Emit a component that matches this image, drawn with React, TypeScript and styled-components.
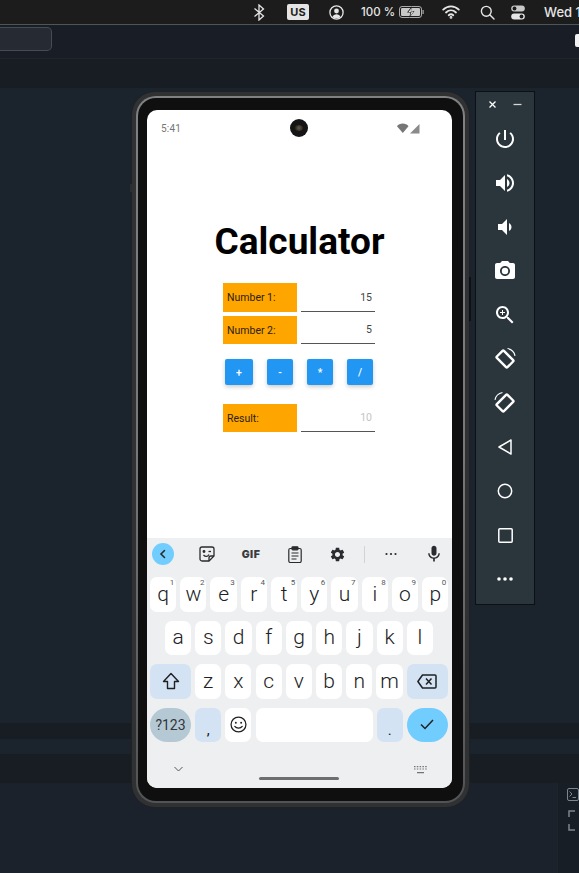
import React from 'react';
import styled, { createGlobalStyle } from 'styled-components';

const GlobalStyle = createGlobalStyle`
  html, body {
    margin: 0;
    padding: 0;
    height: 100%;
    overflow: hidden;
    background: #1b232d;
    font-family: "Roboto", "Liberation Sans", sans-serif;
  }
  #root { height: 100%; }
  * { box-sizing: border-box; }
`;

const ROW_ONE = [
  ['q', '1'], ['w', '2'], ['e', '3'], ['r', '4'], ['t', '5'],
  ['y', '6'], ['u', '7'], ['i', '8'], ['o', '9'], ['p', '0'],
];
const ROW_TWO = ['a', 's', 'd', 'f', 'g', 'h', 'j', 'k', 'l'];
const ROW_THREE = ['z', 'x', 'c', 'v', 'b', 'n', 'm'];

const GEAR = 'M19.14 12.94c.04-.3.06-.61.06-.94 0-.32-.02-.64-.07-.94l2.03-1.58c.18-.14.23-.41.12-.61l-1.92-3.32c-.12-.22-.37-.29-.59-.22l-2.39.96c-.5-.38-1.03-.7-1.62-.94l-.36-2.54c-.04-.24-.24-.41-.48-.41h-3.84c-.24 0-.43.17-.47.41l-.36 2.54c-.59.24-1.13.57-1.62.94l-2.39-.96c-.22-.08-.47 0-.59.22L2.74 8.87c-.12.21-.08.47.12.61l2.03 1.58c-.05.3-.09.63-.09.94s.02.64.07.94l-2.03 1.58c-.18.14-.23.41-.12.61l1.92 3.32c.12.22.37.29.59.22l2.39-.96c.5.38 1.03.7 1.62.94l.36 2.54c.05.24.24.41.48.41h3.84c.24 0 .44-.17.47-.41l.36-2.54c.59-.24 1.13-.56 1.62-.94l2.39.96c.22.08.47 0 .59-.22l1.92-3.32c.12-.22.07-.47-.12-.61l-2.01-1.58zM12 15.6c-1.98 0-3.6-1.62-3.6-3.6s1.62-3.6 3.6-3.6 3.6 1.62 3.6 3.6-1.62 3.6-3.6 3.6z';
const MIC = 'M12 14c1.66 0 2.99-1.34 2.99-3L15 5c0-1.66-1.34-3-3-3S9 3.34 9 5v6c0 1.66 1.34 3 3 3zm5.3-3c0 3-2.54 5.1-5.3 5.1S6.7 14 6.7 11H5c0 3.41 2.72 6.23 6 6.72V21h2v-3.28c3.28-.48 6-3.3 6-6.72h-1.7z';

const Icon = ({ size = 24, children }: { size?: number; children: React.ReactNode }) => (
  <svg width={size} height={size} viewBox="0 0 24 24" fill="currentColor">{children}</svg>
);

const RotateIcon = ({ flip }: { flip?: boolean }) => (
  <svg width="26" height="26" viewBox="0 0 26 26" fill="none" stroke="currentColor">
    <g transform={flip ? 'translate(26 0) scale(-1 1)' : undefined}>
      <rect x="5.5" y="8" width="15" height="10" rx="1" strokeWidth="2.4" transform="rotate(45 13 13)" />
      <path d="M15.5 2.5c3.8 .8 6.800 3.600 7.500 7.300" strokeWidth="1.2" />
    </g>
  </svg>
);

export default function App() {
  return (
    <Page>
      <GlobalStyle />
      <MenuBar>
        <MenuIcon $width={24}>
          <svg width="12" height="17" viewBox="0 0 12 17" fill="none" stroke="currentColor" strokeWidth="1.3">
            <path d="M1.500 4.500l9 7.500-4.500 4V1l4.500 4-9 7.500" />
          </svg>
        </MenuIcon>
        <LayoutBadge>US</LayoutBadge>
        <MenuIcon $width={22}>
          <svg width="15" height="15" viewBox="0 0 15 15" fill="none">
            <circle cx="7.500" cy="7.500" r="6.600" stroke="currentColor" strokeWidth="1.3" />
            <circle cx="7.500" cy="6" r="2.400" fill="currentColor" />
            <path d="M3.400 12c.8-2 2.300-2.800 4.100-2.800s3.300.8 4.100 2.800c-2.200 1.700-6 1.700-8.200 0z" fill="currentColor" />
          </svg>
        </MenuIcon>
        <BatteryText>100 %</BatteryText>
        <MenuIcon $width={26}>
          <svg width="25" height="12" viewBox="0 0 25 12" fill="none">
            <rect x=".5" y=".5" width="22" height="11" rx="2.500" stroke="currentColor" opacity=".7" />
            <rect x="2" y="2" width="19" height="8" rx="1.200" fill="currentColor" opacity=".85" />
            <rect x="23.500" y="4" width="1.200" height="4" fill="currentColor" opacity=".7" />
            <path d="M13 0l-5 6.500h3.500L10 12l5.500-7H12z" fill="#1c1c1c" />
            <path d="M12.500 2l-3 4h3l-1.200 4 3.200-4.500h-3z" fill="#eee" />
          </svg>
        </MenuIcon>
        <MenuIcon $width={34} $left={10}>
          <svg width="18" height="14" viewBox="0 0 18 14" fill="none" stroke="currentColor" strokeWidth="1.800" strokeLinecap="round">
            <path d="M1.200 4.600c4.500-4.400 11.100-4.400 15.600 0" />
            <path d="M4 7.500c3-2.800 7-2.800 10 0" />
            <path d="M6.700 10.200c1.500-1.200 3.100-1.200 4.600 0" />
            <circle cx="9" cy="12.400" r=".5" fill="currentColor" />
          </svg>
        </MenuIcon>
        <MenuIcon $width={22} $left={8}>
          <svg width="15" height="15" viewBox="0 0 15 15" fill="none" stroke="currentColor" strokeWidth="1.400">
            <circle cx="6.300" cy="6.300" r="4.900" />
            <path d="M10 10l4 4" strokeLinecap="round" />
          </svg>
        </MenuIcon>
        <MenuIcon $width={16} $left={12}>
          <svg width="14" height="15" viewBox="0 0 14 15">
            <rect x=".2" y=".5" width="13.600" height="6" rx="3" fill="currentColor" opacity=".85" />
            <circle cx="3.500" cy="3.500" r="1.900" fill="#1c1c1c" />
            <rect x=".2" y="8.500" width="13.600" height="6" rx="3" fill="currentColor" />
            <circle cx="10.500" cy="11.500" r="1.900" fill="#1c1c1c" />
          </svg>
        </MenuIcon>
        <Clock>Wed 1</Clock>
      </MenuBar>

      <Toolbar>
        <SearchField />
        <ToolbarChip />
      </Toolbar>
      <SubBar />

      <Workspace>
        <WorkspaceFill />
        <Band $height={16} $dark />
        <Band $height={15} />
        <Band $height={29} $dark />
        <BottomPane>
          <BottomRail>
            <TerminalIcon>
              <svg width="12" height="13" viewBox="0 0 12 13" fill="none" stroke="currentColor" strokeWidth="1">
                <rect x=".5" y=".5" width="11" height="12" rx="1.500" />
                <path d="M2.500 3.500L5 6 2.500 8.500M5.500 9.500H9" />
              </svg>
            </TerminalIcon>
            <BracketIcon>
              <svg width="9" height="21" viewBox="0 0 9 21" fill="none" stroke="currentColor" strokeWidth="1.500">
                <path d="M7 1H1v6M1 14v6h6" />
              </svg>
            </BracketIcon>
          </BottomRail>
        </BottomPane>

        <EmulatorWindow>
          <PhoneShell>
            <VolumeNub />
            <PowerNub />
            <PhoneTrim>
              <PhoneGlass>
                <Screen>
                  <AppArea>
                    <StatusBar>
                      <StatusTime>5:41</StatusTime>
                      <CameraHole><CameraLens /></CameraHole>
                      <StatusIcons>
                        <svg width="23" height="11" viewBox="0 0 23 11" fill="currentColor">
                          <path d="M0 3.200C2-.2 9-.8 11.500 3.200L5.800 10z" />
                          <path d="M22.500 1v9.500H13z" opacity=".85" />
                        </svg>
                      </StatusIcons>
                    </StatusBar>
                    <Title>Calculator</Title>
                    <Form>
                      <FieldRow $height={29}>
                        <FieldLabel>Number 1:</FieldLabel>
                        <FieldValue>15</FieldValue>
                      </FieldRow>
                      <FieldRow $height={28}>
                        <FieldLabel>Number 2:</FieldLabel>
                        <FieldValue>5</FieldValue>
                      </FieldRow>
                      <ButtonRow>
                        <OpButton $wide>+</OpButton>
                        <OpButton>-</OpButton>
                        <OpButton>*</OpButton>
                        <OpButton>/</OpButton>
                      </ButtonRow>
                      <FieldRow $height={28}>
                        <FieldLabel>Result:</FieldLabel>
                        <FieldValue $muted>10</FieldValue>
                      </FieldRow>
                    </Form>
                  </AppArea>

                  <Keyboard>
                    <KeyboardTools>
                      <BackCircle>
                        <svg width="12" height="12" viewBox="0 0 12 12" fill="none" stroke="currentColor" strokeWidth="1.600" strokeLinecap="round">
                          <path d="M7.500 2.500L4 6l3.500 3.500" />
                        </svg>
                      </BackCircle>
                      <ToolSlot $width={44}>
                        <svg width="16" height="16" viewBox="0 0 16 16" fill="none" stroke="currentColor" strokeWidth="1.300">
                          <path d="M3 1h10a2 2 0 0 1 2 2v7l-5 5H3a2 2 0 0 1-2-2V3a2 2 0 0 1 2-2z" />
                          <path d="M10 15v-3a2 2 0 0 1 2-2h3M4.500 9c1.800 2 4 2 5.500-.5" />
                          <circle cx="5" cy="5.500" r=".8" fill="currentColor" />
                          <path d="M9.500 5.500h2.500" />
                        </svg>
                      </ToolSlot>
                      <ToolSlot $width={44}><GifLabel>GIF</GifLabel></ToolSlot>
                      <ToolSlot $width={43}>
                        <svg width="14" height="17" viewBox="0 0 14 17" fill="none" stroke="currentColor" strokeWidth="1.200">
                          <rect x=".8" y="2.500" width="12.400" height="14" rx="1.500" />
                          <rect x="4" y=".8" width="6" height="3" rx=".8" fill="currentColor" />
                          <path d="M3.500 7h7M3.500 10h7M3.500 13h5" />
                        </svg>
                      </ToolSlot>
                      <ToolSlot $width={43}><Icon size={17}><path d={GEAR} /></Icon></ToolSlot>
                      <ToolDivider />
                      <ToolSlot $width={52}>
                        <svg width="12" height="4" viewBox="0 0 12 4" fill="currentColor">
                          <circle cx="1.500" cy="2" r="1.100" /><circle cx="6" cy="2" r="1.100" /><circle cx="10.500" cy="2" r="1.100" />
                        </svg>
                      </ToolSlot>
                      <ToolSlot $width={33}><Icon size={20}><path d={MIC} /></Icon></ToolSlot>
                    </KeyboardTools>

                    <KeyRows>
                      <KeyRow>
                        {ROW_ONE.map(([letter, digit]) => (
                          <LetterKey key={letter}>{letter}<KeyHint>{digit}</KeyHint></LetterKey>
                        ))}
                      </KeyRow>
                      <KeyRow $center>
                        {ROW_TWO.map((letter) => <LetterKey key={letter}>{letter}</LetterKey>)}
                      </KeyRow>
                      <KeyRow>
                        <ActionKey>
                          <svg width="18" height="18" viewBox="0 0 18 18" fill="none" stroke="#202124" strokeWidth="1.400" strokeLinejoin="round">
                            <path d="M9 1.500L1.500 9.500H5.500V16.500H12.500V9.500H16.500z" />
                          </svg>
                        </ActionKey>
                        {ROW_THREE.map((letter) => <LetterKey key={letter}>{letter}</LetterKey>)}
                        <ActionKey>
                          <svg width="20" height="15" viewBox="0 0 20 15" fill="none" stroke="#202124" strokeWidth="1.500">
                            <path d="M5.500 1H18a1 1 0 0 1 1 1v11a1 1 0 0 1-1 1H5.500L.9 7.500z" strokeLinejoin="round" />
                            <path d="M9 4.500l5.500 6M14.500 4.500L9 10.500" />
                          </svg>
                        </ActionKey>
                      </KeyRow>
                      <KeyRow>
                        <SymbolsKey>?123</SymbolsKey>
                        <PunctuationKey>,</PunctuationKey>
                        <LetterKey>
                          <svg width="17" height="17" viewBox="0 0 16 16" fill="none" stroke="#202124" strokeWidth="1.200">
                            <circle cx="8" cy="8" r="7" />
                            <circle cx="5.500" cy="6.300" r=".9" fill="#202124" stroke="none" />
                            <circle cx="10.500" cy="6.300" r=".9" fill="#202124" stroke="none" />
                            <path d="M4.500 9.800c1.500 2.200 5.500 2.200 7 0" strokeLinecap="round" />
                          </svg>
                        </LetterKey>
                        <SpaceKey />
                        <PunctuationKey>.</PunctuationKey>
                        <ConfirmKey>
                          <svg width="14" height="11" viewBox="0 0 14 11" fill="none" stroke="#202124" strokeWidth="1.500">
                            <path d="M1 5.500l4 4 8-8.500" />
                          </svg>
                        </ConfirmKey>
                      </KeyRow>
                    </KeyRows>

                    <KeyboardFoot>
                      <FootChevron>
                        <svg width="9" height="6" viewBox="0 0 9 6" fill="none" stroke="currentColor" strokeWidth="1">
                          <path d="M.5 1l4 4 4-4" />
                        </svg>
                      </FootChevron>
                      <HomeHandle />
                      <FootKeyboard>
                        <svg width="13" height="8" viewBox="0 0 13 8" fill="currentColor" opacity=".8">
                          <path d="M0 0h1.500v1.200H0zM2.800 0h1.500v1.200H2.800zM5.600 0h1.500v1.200H5.600zM8.400 0h1.500v1.200H8.400zM11.200 0h1.500v1.200h-1.500zM0 2.400h1.500v1.200H0zM2.800 2.400h1.500v1.200H2.800zM5.600 2.400h1.500v1.200H5.600zM8.400 2.400h1.500v1.200H8.400zM11.200 2.400h1.500v1.200h-1.500zM3 6h7v1.200H3z" />
                        </svg>
                      </FootKeyboard>
                    </KeyboardFoot>
                  </Keyboard>
                </Screen>
              </PhoneGlass>
            </PhoneTrim>
          </PhoneShell>

          <ControlPanel>
            <PanelHead>
              <svg width="9" height="9" viewBox="0 0 9 9" stroke="currentColor" strokeWidth="1.300"><path d="M1.500 1.500l6 6M7.500 1.500l-6 6" /></svg>
              <svg width="9" height="9" viewBox="0 0 9 9" stroke="currentColor" strokeWidth="1.300" opacity=".8"><path d="M.5 4.500h8" /></svg>
            </PanelHead>
            <PanelButton>
              <Icon><path d="M13 3h-2v10h2V3zm4.830 2.170l-1.420 1.420C17.990 7.860 19 9.810 19 12c0 3.870-3.130 7-7 7s-7-3.130-7-7c0-2.190 1.010-4.140 2.580-5.420L6.170 5.170C4.230 6.820 3 9.260 3 12c0 4.970 4.030 9 9 9s9-4.030 9-9c0-2.740-1.230-5.180-3.170-6.830z" /></Icon>
            </PanelButton>
            <PanelButton>
              <Icon><path d="M3 9v6h4l5 5V4L7 9H3zm13.500 3c0-1.770-1.020-3.290-2.500-4.030v8.050c1.480-.73 2.500-2.250 2.500-4.020zM14 3.230v2.060c2.890.86 5 3.540 5 6.710s-2.110 5.850-5 6.710v2.060c4.010-.91 7-4.490 7-8.770s-2.990-7.860-7-8.770z" /></Icon>
            </PanelButton>
            <PanelButton>
              <Icon><path d="M18.500 12c0-1.770-1.020-3.290-2.500-4.030v8.050c1.480-.73 2.500-2.250 2.500-4.020zM5 9v6h4l5 5V4L9 9H5z" /></Icon>
            </PanelButton>
            <PanelButton>
              <Icon>
                <path d="M9 2L7.170 4H4c-1.100 0-2 .9-2 2v12c0 1.100.9 2 2 2h16c1.100 0 2-.9 2-2V6c0-1.100-.9-2-2-2h-3.170L15 2H9zm3 15c-2.760 0-5-2.240-5-5s2.240-5 5-5 5 2.240 5 5-2.240 5-5 5z" />
                <circle cx="12" cy="12" r="3.200" />
              </Icon>
            </PanelButton>
            <PanelButton>
              <Icon>
                <path d="M15.500 14h-.79l-.28-.27C15.410 12.590 16 11.110 16 9.500 16 5.910 13.090 3 9.500 3S3 5.910 3 9.500 5.910 16 9.500 16c1.610 0 3.090-.59 4.230-1.570l.27.28v.79l5 4.990L20.490 19l-4.990-5zm-6 0C7.010 14 5 11.990 5 9.500S7.010 5 9.500 5 14 7.010 14 9.500 11.990 14 9.500 14z" />
                <path d="M12 10h-2v2H9v-2H7V9h2V7h1v2h2v1z" />
              </Icon>
            </PanelButton>
            <PanelButton><RotateIcon /></PanelButton>
            <PanelButton><RotateIcon flip /></PanelButton>
            <PanelButton>
              <svg width="14" height="16" viewBox="0 0 14 16" fill="none" stroke="currentColor" strokeWidth="1.500" strokeLinejoin="round"><path d="M13 1L1 8l12 7z" /></svg>
            </PanelButton>
            <PanelButton>
              <svg width="16" height="16" viewBox="0 0 16 16" fill="none" stroke="currentColor" strokeWidth="1.500"><circle cx="8" cy="8" r="6.700" /></svg>
            </PanelButton>
            <PanelButton>
              <svg width="15" height="15" viewBox="0 0 15 15" fill="none" stroke="currentColor" strokeWidth="1.500"><rect x=".8" y=".8" width="13.400" height="13.400" rx="1" /></svg>
            </PanelButton>
            <PanelButton>
              <svg width="16" height="4" viewBox="0 0 16 4" fill="currentColor">
                <circle cx="2" cy="2" r="1.800" /><circle cx="8" cy="2" r="1.800" /><circle cx="14" cy="2" r="1.800" />
              </svg>
            </PanelButton>
          </ControlPanel>
        </EmulatorWindow>
      </Workspace>
    </Page>
  );
}

const Page = styled.div`
  height: 873px;
  display: flex;
  flex-direction: column;
  overflow: hidden;
`;

const MenuBar = styled.header`
  height: 25px;
  flex: none;
  display: flex;
  align-items: center;
  padding-left: 247px;
  background: #1c1c1c;
  border-bottom: 1px solid #4d5556;
  color: #e6e6e6;
  white-space: nowrap;
  overflow: hidden;
`;

const MenuIcon = styled.span<{ $width: number; $left?: number }>`
  width: ${(p) => p.$width}px;
  margin-left: ${(p) => p.$left ?? 0}px;
  flex: none;
  display: flex;
  align-items: center;
  justify-content: center;
`;

const LayoutBadge = styled.span`
  width: 22px;
  height: 16px;
  margin: 0 16px 0 16px;
  flex: none;
  border-radius: 2px;
  background: #e4e4e4;
  color: #1c1c1c;
  font: 700 11px "Inter", "Liberation Sans", sans-serif;
  display: flex;
  align-items: center;
  justify-content: center;
`;

const BatteryText = styled.span`
  width: 32px;
  margin: 0 5px 0 14px;
  font: 500 11.5px "Inter", "Liberation Sans", sans-serif;
  flex: none;
`;

const Clock = styled.span`
  margin-left: 18px;
  font: 500 13px "Inter", "Liberation Sans", sans-serif;
  flex: none;
`;

const Toolbar = styled.div`
  height: 34px;
  flex: none;
  display: flex;
  align-items: center;
  justify-content: space-between;
  background: #191e26;
  border-bottom: 1px solid #1f252a;
`;

const SearchField = styled.div`
  width: 52px;
  height: 24px;
  margin-top: -5px;
  background: #262b33;
  border: 1px solid #474c53;
  border-left: none;
  border-radius: 0 5px 5px 0;
`;

const ToolbarChip = styled.div`
  width: 4px;
  height: 13px;
  margin-top: -2px;
  background: #f2f2f2;
  border-radius: 2px 0 0 2px;
`;

const SubBar = styled.div`
  height: 29px;
  flex: none;
  background: #181d24;
`;

const Workspace = styled.main`
  position: relative;
  flex: 1;
  display: flex;
  flex-direction: column;
  background: #1b232d;
`;

const WorkspaceFill = styled.div`
  flex: 1;
`;

const Band = styled.div<{ $height: number; $dark?: boolean }>`
  height: ${(p) => p.$height}px;
  flex: none;
  background: ${(p) => (p.$dark ? '#181d24' : '#1b232c')};
`;

const BottomPane = styled.div`
  height: 90px;
  flex: none;
  display: flex;
  justify-content: flex-end;
  background: #1b222c;
`;

const BottomRail = styled.div`
  width: 22px;
  padding: 3px 0 0 9px;
  border-left: 1px solid #1f2428;
  background: #181e26;
  color: #7c8590;
  display: flex;
  flex-direction: column;
  gap: 11px;
`;

const TerminalIcon = styled.span`
  display: block;
  height: 13px;
`;

const BracketIcon = styled.span`
  display: block;
  margin-left: 1px;
`;

const EmulatorWindow = styled.section`
  position: absolute;
  left: 131px;
  top: 3px;
  display: flex;
  align-items: flex-start;
  gap: 5px;
`;

const PhoneShell = styled.div`
  position: relative;
  width: 339px;
  height: 717px;
  padding: 4px;
  border-radius: 24px;
  background: #2f3133;
  border: 1px solid #202123;
`;

const VolumeNub = styled.span`
  position: absolute;
  left: -2px;
  top: 92px;
  width: 2px;
  height: 8px;
  background: #2c2e30;
`;

const PowerNub = styled.span`
  position: absolute;
  right: -2px;
  top: 185px;
  width: 2px;
  height: 44px;
  background: #0d1014;
`;

const PhoneTrim = styled.div`
  height: 100%;
  padding: 2px;
  border-radius: 20px;
  background: linear-gradient(#808183, #77787a 50%, #525355);
`;

const PhoneGlass = styled.div`
  height: 100%;
  padding: 12px 11px 13px 9px;
  border-radius: 18px;
  background: #0f0f10;
`;

const Screen = styled.div`
  height: 100%;
  width: 305px;
  display: flex;
  flex-direction: column;
  border-radius: 10px;
  overflow: hidden;
  background: #fff;
`;

const AppArea = styled.div`
  height: 428px;
  flex: none;
  position: relative;
`;

const StatusBar = styled.div`
  height: 36px;
  padding: 0 32px 0 14px;
  display: flex;
  align-items: center;
  justify-content: space-between;
  color: #767676;
`;

const StatusTime = styled.span`
  font-size: 10px;
  letter-spacing: .2px;
`;

const StatusIcons = styled.span`
  display: flex;
  align-items: center;
`;

const CameraHole = styled.span`
  position: absolute;
  left: 143px;
  top: 9px;
  width: 18px;
  height: 18px;
  border-radius: 50%;
  background: #151515;
  display: flex;
  align-items: center;
  justify-content: center;
`;

const CameraLens = styled.span`
  width: 8px;
  height: 6px;
  border-radius: 50%;
  background: radial-gradient(circle, #6b5a44 0%, #2e2a26 70%);
`;

const Title = styled.h1`
  margin: 74px 0 19px;
  height: 44px;
  line-height: 44px;
  text-align: center;
  color: #000;
  font-size: 37px;
  font-weight: 700;
`;

const Form = styled.div`
  width: 152px;
  margin-left: 76px;
  display: flex;
  flex-direction: column;
  gap: 4px;
`;

const FieldRow = styled.div<{ $height: number }>`
  height: ${(p) => p.$height}px;
  display: grid;
  grid-template-columns: 74px 74px;
  column-gap: 4px;
`;

const FieldLabel = styled.div`
  padding-left: 4px;
  background: #ffa500;
  color: #2b2210;
  font-size: 10.5px;
  display: flex;
  align-items: center;
`;

const FieldValue = styled.div<{ $muted?: boolean }>`
  padding-right: 3px;
  border-bottom: 1.5px solid #555;
  color: ${(p) => (p.$muted ? '#c4c4c4' : '#444')};
  font-size: 10.5px;
  display: flex;
  align-items: center;
  justify-content: flex-end;
`;

const ButtonRow = styled.div`
  height: 26px;
  margin: 11px 0 15px 2px;
  display: flex;
  gap: 14px;
`;

const OpButton = styled.button<{ $wide?: boolean }>`
  width: ${(p) => (p.$wide ? 28 : 26)}px;
  height: 26px;
  padding: 0;
  border: none;
  border-radius: 2px;
  background: #2196f3;
  color: #fff;
  font: 500 10.5px "Roboto", sans-serif;
  box-shadow: 0 2px 4px rgba(0, 0, 0, .2);
`;

const Keyboard = styled.div`
  flex: 1;
  display: flex;
  flex-direction: column;
  background: #eeeff1;
`;

const KeyboardTools = styled.div`
  height: 39px;
  flex: none;
  padding: 0 0 7px 5px;
  display: flex;
  align-items: center;
  color: #2a2b2e;
`;

const BackCircle = styled.span`
  width: 22px;
  height: 22px;
  margin-right: 11px;
  flex: none;
  border-radius: 50%;
  background: #72cdff;
  display: flex;
  align-items: center;
  justify-content: center;
`;

const ToolSlot = styled.span<{ $width: number }>`
  width: ${(p) => p.$width}px;
  flex: none;
  display: flex;
  align-items: center;
  justify-content: center;
`;

const GifLabel = styled.span`
  font: 900 10.5px "Inter", "Liberation Sans", sans-serif;
  letter-spacing: .5px;
  color: #3a3b3e;
`;

const ToolDivider = styled.span`
  width: 1px;
  height: 17px;
  margin-left: 5px;
  flex: none;
  background: #d2d3d6;
`;

const KeyRows = styled.div`
  padding: 0 4px 0 3px;
  display: flex;
  flex-direction: column;
  gap: 9px;
`;

const KeyRow = styled.div<{ $center?: boolean }>`
  height: 34.5px;
  display: flex;
  gap: 4.05px;
  justify-content: ${(p) => (p.$center ? 'center' : 'flex-start')};
`;

const KeyBase = styled.span`
  height: 100%;
  flex: none;
  border-radius: 7px;
  display: flex;
  align-items: center;
  justify-content: center;
  color: #202124;
`;

const LetterKey = styled(KeyBase)`
  position: relative;
  width: 26.2px;
  padding-bottom: 1px;
  background: #fff;
  font-size: 21px;
  font-weight: 300;
`;

const KeyHint = styled.span`
  position: absolute;
  top: 1px;
  right: 2px;
  color: #55565a;
  font-size: 8px;
  font-weight: 400;
`;

const ActionKey = styled(KeyBase)`
  width: 41px;
  background: #d3e3f3;
`;

const SymbolsKey = styled(KeyBase)`
  width: 41px;
  border-radius: 18px;
  background: #b5c9d5;
  color: #33363a;
  font-size: 14px;
`;

const PunctuationKey = styled(KeyBase)`
  width: 26.2px;
  padding-top: 10px;
  background: #d3e3f3;
  font-size: 15px;
`;

const SpaceKey = styled(KeyBase)`
  width: 117px;
  background: #fff;
`;

const ConfirmKey = styled(KeyBase)`
  width: 41px;
  border-radius: 18px;
  background: #72cdff;
`;

const KeyboardFoot = styled.div`
  flex: 1;
  position: relative;
  color: #55565a;
`;

const FootChevron = styled.span`
  position: absolute;
  left: 27px;
  top: 24px;
  display: flex;
`;

const FootKeyboard = styled.span`
  position: absolute;
  right: 25px;
  top: 24px;
  display: flex;
`;

const HomeHandle = styled.span`
  position: absolute;
  left: 112px;
  top: 35px;
  width: 80px;
  height: 3px;
  border-radius: 2px;
  background: #6e6e6e;
`;

const ControlPanel = styled.aside`
  width: 60px;
  height: 514px;
  flex: none;
  background: #2a353c;
  border: 1px solid #0c1014;
  color: #fff;
  display: flex;
  flex-direction: column;
`;

const PanelHead = styled.div`
  height: 25px;
  padding: 0 12px;
  display: flex;
  align-items: center;
  justify-content: space-between;
`;

const PanelButton = styled.div`
  height: 44px;
  flex: none;
  display: flex;
  align-items: center;
  justify-content: center;
`;
